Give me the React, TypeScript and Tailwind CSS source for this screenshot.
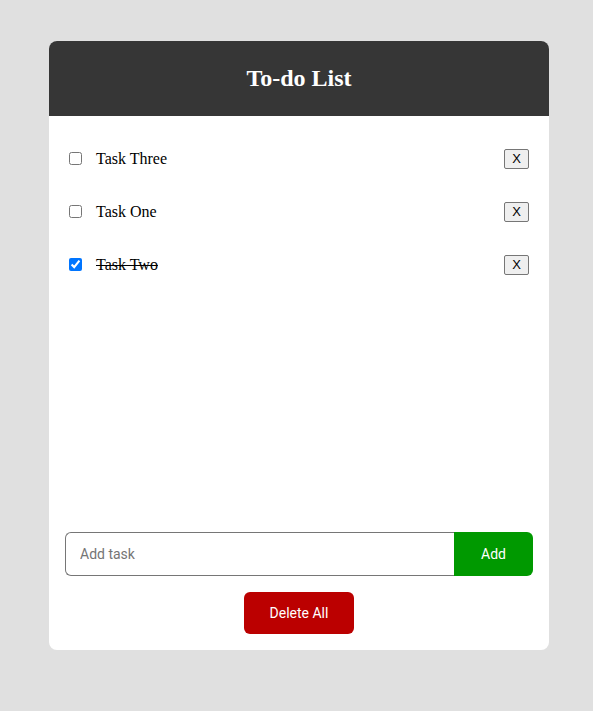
import React from "react";

const tasks = [
  { name: "Task Three", done: false },
  { name: "Task One", done: false },
  { name: "Task Two", done: true },
];

export default function App() {
  return (
    <div className="min-h-[711px] w-full bg-[#e0e0e0] pt-[41px] pl-[49px]">
      <div className="flex h-[609px] w-[500px] flex-col overflow-hidden rounded-[8px] bg-white">
        <div className="flex h-[75px] items-center justify-center bg-[#363636] pb-[1px]">
          <h1 className="text-[24px] font-bold text-white" style={{ fontFamily: '"Liberation Serif", serif' }}>
            To-do List
          </h1>
        </div>
        <div className="flex-1 pt-[16px]">
          {tasks.map((t) => (
            <div key={t.name} className="flex h-[53px] items-center pl-[16px] pr-[20px]">
              <input type="checkbox" defaultChecked={t.done} className="m-[3px_3px_3px_4px] h-[13px] w-[13px]" />
              <span
                className={`ml-[11px] flex-1 text-[16px] text-black ${t.done ? "line-through" : ""}`}
                style={{ fontFamily: '"Liberation Serif", serif' }}
              >
                {t.name}
              </span>
              <button
                className="flex h-[20px] w-[25px] items-center justify-center rounded-[2px] border border-[#767676] bg-[#efefef] text-[13px] text-black"
                style={{ fontFamily: '"Liberation Sans", Arial, sans-serif' }}
              >
                X
              </button>
            </div>
          ))}
        </div>
        <div className="px-[16px] pb-[16px]" style={{ fontFamily: 'Roboto, "Liberation Sans", sans-serif' }}>
          <div className="flex h-[44px]">
            <input
              placeholder="Add task"
              className="h-full flex-1 rounded-l-[6px] border border-r-0 border-[#767676] pl-[14px] text-[14px] text-black outline-none placeholder:text-[#757575]"
            />
            <button className="h-full w-[79px] rounded-r-[6px] bg-[#009900] text-[14px] text-white">Add</button>
          </div>
          <div className="mt-[16px] flex justify-center">
            <button className="h-[42px] w-[110px] rounded-[6px] bg-[#bb0000] text-[14px] text-white">Delete All</button>
          </div>
        </div>
      </div>
    </div>
  );
}
